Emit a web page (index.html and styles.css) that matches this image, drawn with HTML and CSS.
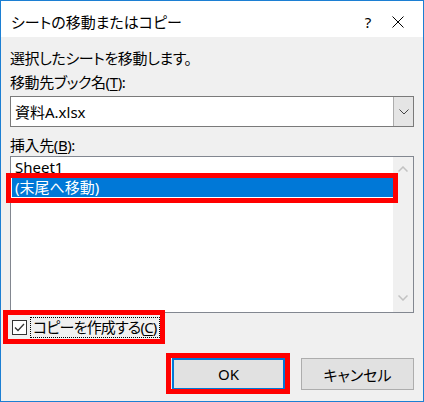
FILE: index.html
```html
<!DOCTYPE html>
<html lang="ja">
<head>
  <meta charset="UTF-8" />
  <meta name="viewport" content="width=device-width, initial-scale=1.0"/>
  <title>シートの移動またはコピー</title>
  <link rel="stylesheet" href="styles.css">
</head>
<body>
  <div class="dialog">
    <div class="titlebar">
      <span class="title">シートの移動またはコピー</span>
      <span class="tb-btn help">?</span>
      <span class="tb-btn close">
        <svg width="12" height="12" viewBox="0 0 12 12"><path d="M0.5 0.5 L11.5 11.5 M11.5 0.5 L0.5 11.5" stroke="#000" stroke-width="1" fill="none"/></svg>
      </span>
    </div>
    <div class="content">
      <div class="label first">選択したシートを移動します。</div>
      <div class="label">移動先ブック名(<u>T</u>):</div>
      <div class="combo">
        <span class="combo-text">資料A.xlsx</span>
        <span class="combo-btn">
          <svg width="10" height="6" viewBox="0 0 10 6"><path d="M0.5 0.5 L5 5 L9.5 0.5" stroke="#444" stroke-width="1" fill="none"/></svg>
        </span>
      </div>
      <div class="label third">挿入先(<u>B</u>):</div>
      <div class="listbox">
        <div class="items">
          <div class="item">Sheet1</div>
          <div class="item selected">(末尾へ移動)<span class="mark"></span></div>
        </div>
        <div class="scrollbar">
          <svg width="10" height="6" viewBox="0 0 10 6"><path d="M0.5 5.5 L5 1 L9.5 5.5" stroke="#c2c2c2" stroke-width="1.5" fill="none"/></svg>
          <svg width="10" height="6" viewBox="0 0 10 6"><path d="M0.5 0.5 L5 5 L9.5 0.5" stroke="#c2c2c2" stroke-width="1.5" fill="none"/></svg>
        </div>
      </div>
      <div class="check-row">
        <span class="checkbox">
          <svg width="13" height="13" viewBox="0 0 13 13"><path d="M2 6.5 L5 9.5 L11 3" stroke="#333" stroke-width="1.3" fill="none"/></svg>
        </span>
        <span class="check-label">コピーを作成する(<u>C</u>)</span>
        <span class="mark"></span>
      </div>
      <div class="buttons">
        <div class="btn default">OK<span class="mark"></span></div>
        <div class="btn">キャンセル</div>
      </div>
    </div>
  </div>
</body>
</html>
```

FILE: styles.css
```css
body { margin: 0; font-family: "Noto Sans", "Noto Sans CJK JP", sans-serif; font-size: 15px; font-feature-settings: "palt"; color: #000; }
.dialog { width: 424px; height: 402px; box-sizing: border-box; border: 1px solid #1c7fd3; background: #f0f0f0; display: flex; flex-direction: column; }

/* title bar */
.titlebar { height: 36px; background: #fff; display: flex; align-items: center; padding-top: 5px; box-sizing: border-box; }
.title { flex: 1; padding-left: 10px; line-height: 20px; }
.tb-btn { width: 20px; display: flex; justify-content: center; line-height: 20px; }
.help { margin-right: 10px; }
.close { margin-right: 15px; }

/* body */
.content { flex: 1; padding: 0 9px; display: flex; flex-direction: column; }
.label { line-height: 20px; margin-top: 4px; letter-spacing: -0.4px; }
.label.first { margin-top: 11px; }
.label.third { margin-top: 8px; }
u { text-decoration-thickness: 1px; text-underline-offset: 2px; }

.combo { margin-top: 4px; height: 31px; box-sizing: border-box; border: 1px solid #7a7a7a; background: #fff; display: flex; align-items: center; }
.combo-text { flex: 1; padding-left: 4px; }
.combo-btn { width: 20px; height: 100%; box-sizing: border-box; border-left: 1px solid #adadad; background: #e5e5e5; display: flex; align-items: center; justify-content: center; }

.listbox { margin-top: 1px; height: 157px; box-sizing: border-box; border: 1px solid #828790; background: #fff; display: flex; }
.items { flex: 1; padding: 0 0 0 1px; }
.item { height: 20px; line-height: 20px; padding-left: 3px; position: relative; }
.item.selected { background: #0078d7; color: #fff; }
.scrollbar { width: 20px; background: #f0f0f0; display: flex; flex-direction: column; justify-content: space-between; align-items: center; padding: 9px 0 11px; box-sizing: border-box; }

.check-row { margin-top: 4px; height: 21px; display: flex; align-items: center; position: relative; align-self: flex-start; }
.checkbox { width: 15px; height: 15px; box-sizing: border-box; border: 1px solid #333; background: #fff; margin-left: 2px; display: flex; align-items: center; justify-content: center; }
.check-label { margin-left: 3px; padding: 0 2px; line-height: 19px; border: 1px dotted #000; letter-spacing: -0.8px; }

.buttons { margin-top: 20px; display: flex; justify-content: flex-end; gap: 16px; }
.btn { width: 113px; height: 32px; box-sizing: border-box; background: #e1e1e1; border: 1px solid #adadad; display: flex; align-items: center; justify-content: center; position: relative; }
.btn.default { border: 2px solid #0078d7; }

/* red annotation frames */
.mark { position: absolute; border: 5px solid #ff0000; pointer-events: none; }
.item .mark { left: -6px; right: -5px; top: -4px; bottom: -6px; }
.check-row .mark { left: -7px; right: -5px; top: -7px; bottom: -6px; }
.btn .mark { left: -8px; right: -7px; top: -7px; bottom: -6px; }
```
